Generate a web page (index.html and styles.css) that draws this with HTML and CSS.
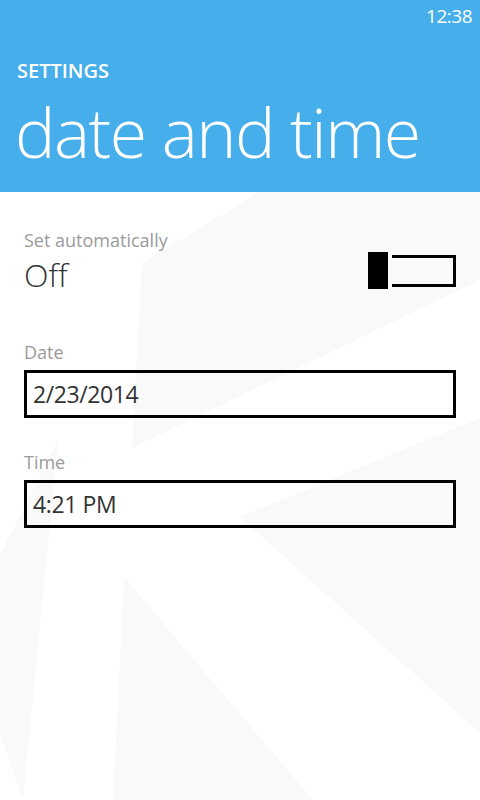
FILE: index.html
```html
<!DOCTYPE html>
<html>
<head>
<meta charset="utf-8">
<link rel="stylesheet" href="styles.css">
</head>
<body>
<div class="screen">
  <svg class="bg" width="480" height="800" viewBox="0 0 480 800">
    <polygon points="260,192 480,192 480,280 132,448 142,263" />
    <polygon points="240,517 480,418 480,733" />
    <polygon points="58,440 23,800 0,733 0,555" />
    <polygon points="124,577 113,800 313,800" />
  </svg>
  <header class="header">
    <div class="status"><span class="clock">12:38</span></div>
    <div class="app-title">SETTINGS</div>
    <h1 class="page-title">date and time</h1>
  </header>
  <main class="content">
    <section class="toggle-row">
      <div class="toggle-text">
        <div class="label">Set automatically</div>
        <div class="value">Off</div>
      </div>
      <div class="switch">
        <span class="thumb"></span>
        <span class="track"></span>
      </div>
    </section>
    <section class="field">
      <div class="label">Date</div>
      <div class="box">2/23/2014</div>
    </section>
    <section class="field">
      <div class="label">Time</div>
      <div class="box">4:21 PM</div>
    </section>
  </main>
</div>
</body>
</html>
```
FILE: styles.css
```css
* { box-sizing: border-box; }
html, body { margin: 0; padding: 0; }
body {
  width: 480px;
  height: 800px;
  background: #ffffff;
  font-family: "Open Sans", "Noto Sans", "Liberation Sans", sans-serif;
  overflow: hidden;
}
.screen {
  position: relative;
  width: 480px;
  height: 800px;
  background: #ffffff;
}
.bg {
  position: absolute;
  left: 0;
  top: 0;
  z-index: 0;
}
.bg polygon { fill: #f9f9f9; }
.header {
  position: relative;
  z-index: 1;
  height: 192px;
  background: #45aeeb;
  color: #ffffff;
  display: flex;
  flex-direction: column;
}
.status {
  display: flex;
  justify-content: flex-end;
  padding: 3px 8px 0 0;
  height: 40px;
}
.clock {
  font-size: 19px;
  line-height: 26px;
  letter-spacing: -0.5px;
}
.app-title {
  margin: 19px 0 0 17px;
  font-size: 20px;
  font-weight: 600;
  line-height: 24px;
}
.page-title {
  margin: 0 0 0 15px;
  font-size: 68px;
  font-weight: 300;
  line-height: 80px;
  letter-spacing: -1.5px;
  position: relative;
  top: 9px;
}
.content {
  position: relative;
  z-index: 1;
  padding: 36px 24px 0 24px;
  display: flex;
  flex-direction: column;
}
.label {
  font-size: 18px;
  line-height: 24px;
  color: #9a9a9a;
}
.toggle-row {
  display: flex;
  justify-content: space-between;
  align-items: flex-start;
}
.value {
  margin-top: 3px;
  font-size: 32px;
  line-height: 40px;
  color: #333333;
  font-weight: 300;
}
.switch {
  display: flex;
  align-items: center;
  gap: 4px;
  margin-top: 24px;
}
.thumb {
  width: 20px;
  height: 37px;
  background: #000000;
}
.track {
  width: 64px;
  height: 32px;
  border: 3px solid #000000;
  border-left: none;
}
.field {
  margin-top: 45px;
  display: flex;
  flex-direction: column;
}
.field + .field { margin-top: 32px; }
.box {
  margin-top: 6px;
  height: 48px;
  border: 3px solid #000000;
  padding: 0 0 0 6px;
  font-size: 23px;
  line-height: 42px;
  color: #333333;
  letter-spacing: -0.4px;
}
```
